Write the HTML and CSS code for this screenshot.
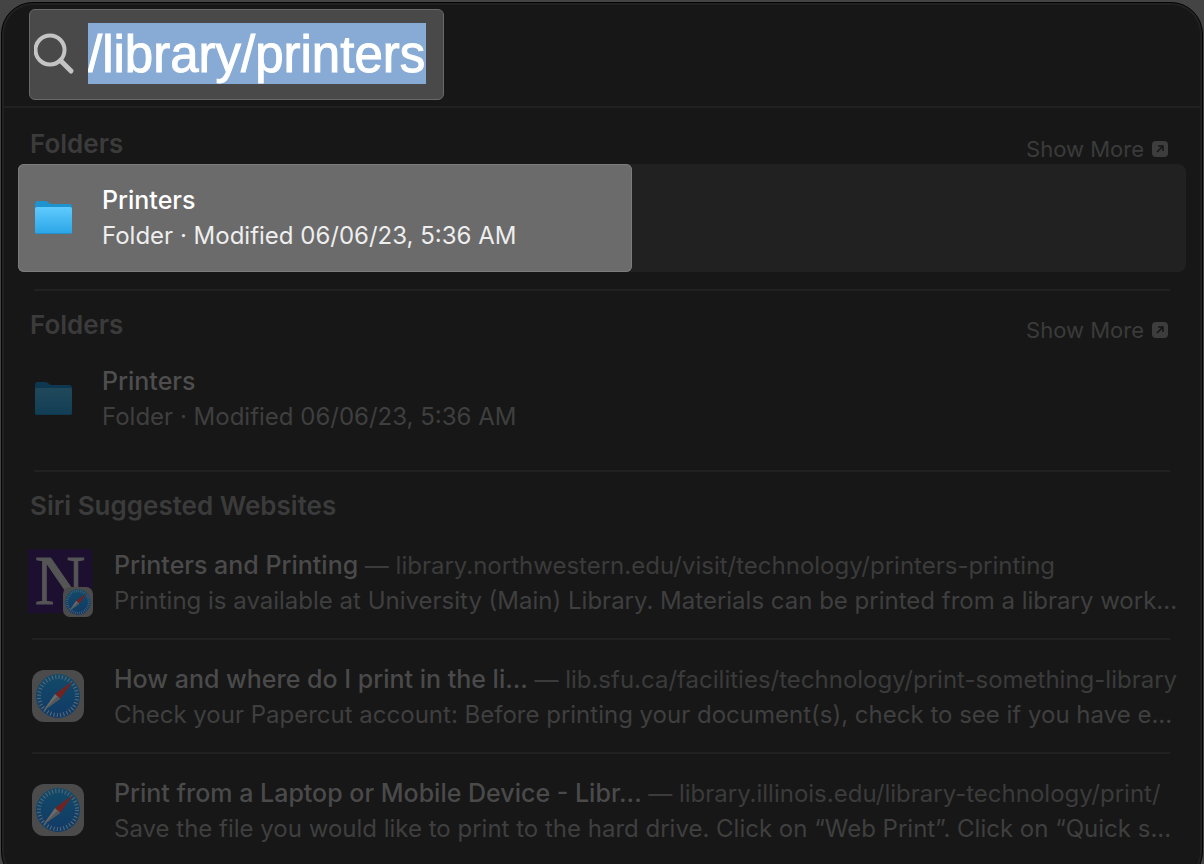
FILE: index.html
```
<!DOCTYPE html>
<html lang="en">
<head>
    <meta charset="UTF-8">
    <meta name="viewport" content="width=device-width, initial-scale=1.0">
    <title>Spotlight Search</title>
    <link rel="stylesheet" href="styles.css">
</head>
<body>
    <!-- Shared icons -->
    <svg class="icon-defs" width="0" height="0" aria-hidden="true">
        <defs>
            <linearGradient id="folder-front" x1="0" y1="0" x2="0" y2="1">
                <stop offset="0" stop-color="#5fcbfd"/>
                <stop offset="1" stop-color="#2ba5e6"/>
            </linearGradient>
            <linearGradient id="safari-blue" x1="0" y1="0" x2="0" y2="1">
                <stop offset="0" stop-color="#124a68"/>
                <stop offset="1" stop-color="#113a66"/>
            </linearGradient>
            <symbol id="folder" viewBox="0 0 38 36">
                <path d="M0 4Q0 1 3 1H10Q12 1 13 2L14 3Q15 4 17 4H34Q37 4 37 7V20H0Z" fill="#1f93d0"/>
                <rect x="0" y="7" width="37" height="27" rx="2" fill="url(#folder-front)"/>
                <path d="M1 33.500H36" stroke="#2190cb" stroke-width="1"/>
            </symbol>
            <symbol id="safari" viewBox="0 0 52 52">
                <rect width="52" height="52" rx="12" fill="#4b4b4c"/>
                <circle cx="26" cy="26" r="22" fill="url(#safari-blue)"/>
                <circle cx="26" cy="26" r="19" fill="none" stroke="#5b6b78" stroke-width="4" stroke-dasharray="1 2.316"/>
                <path d="M41 11L23 24L28 29Z" fill="#74221f"/>
                <path d="M11 41L23 24L28 29Z" fill="#6b6b6c"/>
                <path d="M11 41L26 26L28 29Z" fill="#565758"/>
            </symbol>
            <symbol id="arrow-box" viewBox="0 0 16 16">
                <rect width="16" height="16" rx="4" fill="#3d3d3d"/>
                <path d="M5 11L10.500 5.500M6 5H11V10" fill="none" stroke="#171717" stroke-width="1.600"/>
            </symbol>
        </defs>
    </svg>

    <main class="spotlight">
        <header class="search-bar">
            <label class="search-box">
                <svg class="search-icon" viewBox="0 0 42 42" role="img" aria-label="Search">
                    <circle cx="16" cy="17" r="14.500" fill="none" stroke="#c4c4c4" stroke-width="4"/>
                    <path d="M26.500 27.500L37 38" stroke="#c4c4c4" stroke-width="5" stroke-linecap="round"/>
                </svg>
                <input class="search-input" type="text" value="/library/printers" spellcheck="false">
            </label>
        </header>

        <section class="group">
            <div class="group-header">
                <h2>Folders</h2>
                <a class="show-more" href="#">Show More <svg viewBox="0 0 16 16"><use href="#arrow-box"/></svg></a>
            </div>
            <div class="track">
                <a class="folder-row selected" href="#">
                    <svg class="folder-icon" viewBox="0 0 38 36"><use href="#folder"/></svg>
                    <div>
                        <h3>Printers</h3>
                        <p>Folder · Modified 06/06/23, 5:36 AM</p>
                    </div>
                </a>
            </div>
        </section>

        <section class="group">
            <div class="group-header">
                <h2>Folders</h2>
                <a class="show-more" href="#">Show More <svg viewBox="0 0 16 16"><use href="#arrow-box"/></svg></a>
            </div>
            <a class="folder-row" href="#">
                <svg class="folder-icon" viewBox="0 0 38 36"><use href="#folder"/></svg>
                <div>
                    <h3>Printers</h3>
                    <p>Folder · Modified 06/06/23, 5:36 AM</p>
                </div>
            </a>
        </section>

        <section class="group">
            <div class="group-header">
                <h2>Siri Suggested Websites</h2>
            </div>
            <a class="site-row" href="#">
                <span class="site-icon university">
                    <span class="letter">N</span>
                    <svg class="badge" viewBox="0 0 52 52"><use href="#safari"/></svg>
                </span>
                <div class="site-text">
                    <h3>Printers and Printing <span class="url">— library.northwestern.edu/visit/technology/printers-printing</span></h3>
                    <p>Printing is available at University (Main) Library. Materials can be printed from a library work...</p>
                </div>
            </a>
            <a class="site-row" href="#">
                <svg class="site-icon" viewBox="0 0 52 52"><use href="#safari"/></svg>
                <div class="site-text">
                    <h3>How and where do I print in the li... <span class="url">— lib.sfu.ca/facilities/technology/print-something-library</span></h3>
                    <p>Check your Papercut account: Before printing your document(s), check to see if you have e...</p>
                </div>
            </a>
            <a class="site-row" href="#">
                <svg class="site-icon" viewBox="0 0 52 52"><use href="#safari"/></svg>
                <div class="site-text">
                    <h3>Print from a Laptop or Mobile Device - Libr... <span class="url">— library.illinois.edu/library-technology/print/</span></h3>
                    <p>Save the file you would like to print to the hard drive. Click on “Web Print”. Click on “Quick s...</p>
                </div>
            </a>
        </section>
    </main>
</body>
</html>
```

FILE: styles.css
```
* {
    box-sizing: border-box;
}
body {
    margin: 0;
    padding: 2px 1px;
    background-color: #444444;
    font-family: Inter, "Liberation Sans", sans-serif;
    font-size: 24px;
    line-height: 35px;
    color: #3f3f3f;
}
h2, h3, p {
    margin: 0;
    font-size: 24px;
    white-space: nowrap;
}
a {
    color: inherit;
    text-decoration: none;
}
.icon-defs {
    position: absolute;
}
.spotlight {
    min-height: calc(100vh - 4px);
    background-color: #171717;
    border: 1px solid #050505;
    border-radius: 32px;
    box-shadow: inset 0 0 0 2px #212121;
    overflow: hidden;
}

/* Search field */
.search-bar {
    padding: 6px 27px;
    border-bottom: 2px solid #212121;
}
.search-box {
    display: inline-flex;
    align-items: center;
    gap: 12px;
    height: 91px;
    padding: 0 17px 2px 4px;
    background-color: #494949;
    border: 1px solid #696969;
    border-radius: 6px;
    vertical-align: top;
}
.search-icon {
    width: 42px;
    height: 42px;
}
.search-input {
    width: 338px;
    height: 61px;
    padding: 2px 0 0;
    border: none;
    outline: none;
    background-color: #88abd6;
    color: white;
    font-family: "Liberation Sans", sans-serif;
    font-size: 51px;
    -webkit-text-stroke: 1px white;
}

/* Result groups */
.group {
    padding: 0 16px 17px;
}
.group + .group::before {
    content: "";
    display: block;
    height: 2px;
    margin: 0 16px -2px;
    background-color: #212121;
}
.group-header {
    display: flex;
    justify-content: space-between;
    height: 56px;
    padding: 18px 18px 0 12px;
}
.group-header h2 {
    font-size: 26px;
    font-weight: 600;
    color: #3b3b3b;
}
.show-more {
    display: flex;
    align-items: center;
    gap: 8px;
    margin-top: 8px;
    font-size: 22px;
    color: #3b3b3b;
}
.show-more svg {
    width: 16px;
    height: 16px;
}
.track {
    background-color: #212121;
    border-radius: 8px;
}
.folder-row {
    display: flex;
    align-items: center;
    gap: 29px;
    height: 108px;
    padding: 0 17px;
}
.folder-row h3 {
    font-size: 25px;
    font-weight: 500;
    color: #4e4e4e;
}
.folder-icon {
    width: 38px;
    height: 36px;
    opacity: 0.4;
    filter: brightness(0.7) saturate(1.3);
}
.selected {
    width: 614px;
    max-width: 100%;
    background-color: #6b6b6b;
    border-radius: 6px;
    box-shadow: inset 0 0 0 1px #7c7c7c;
    color: #eeeeee;
}
.selected h3 {
    color: white;
}
.selected .folder-icon {
    opacity: 1;
    filter: none;
}

/* Website suggestions */
.site-row {
    display: flex;
    gap: 30px;
    margin: 0 16px 0 14px;
    padding: 22px 0 20px;
}
.site-row + .site-row {
    border-top: 2px solid #212121;
}
.site-icon {
    flex: none;
    width: 52px;
    height: 52px;
    margin-top: 8px;
}
.site-text {
    min-width: 0;
}
.site-row h3 {
    font-size: 25px;
    font-weight: 500;
    color: #4a4a4a;
}
.url {
    font-size: 24px;
    font-weight: 400;
    color: #3b3b3b;
}
.university {
    position: relative;
    width: 64px;
    height: 64px;
    margin: 1px -8px 0 -4px;
    background-color: #1c0f30;
    text-align: center;
}
.letter {
    font-family: "Liberation Serif", serif;
    font-size: 70px;
    line-height: 64px;
    color: #555555;
    -webkit-text-stroke: 1px #555555;
}
.badge {
    position: absolute;
    right: -1px;
    bottom: -4px;
    width: 30px;
    height: 30px;
}
```
